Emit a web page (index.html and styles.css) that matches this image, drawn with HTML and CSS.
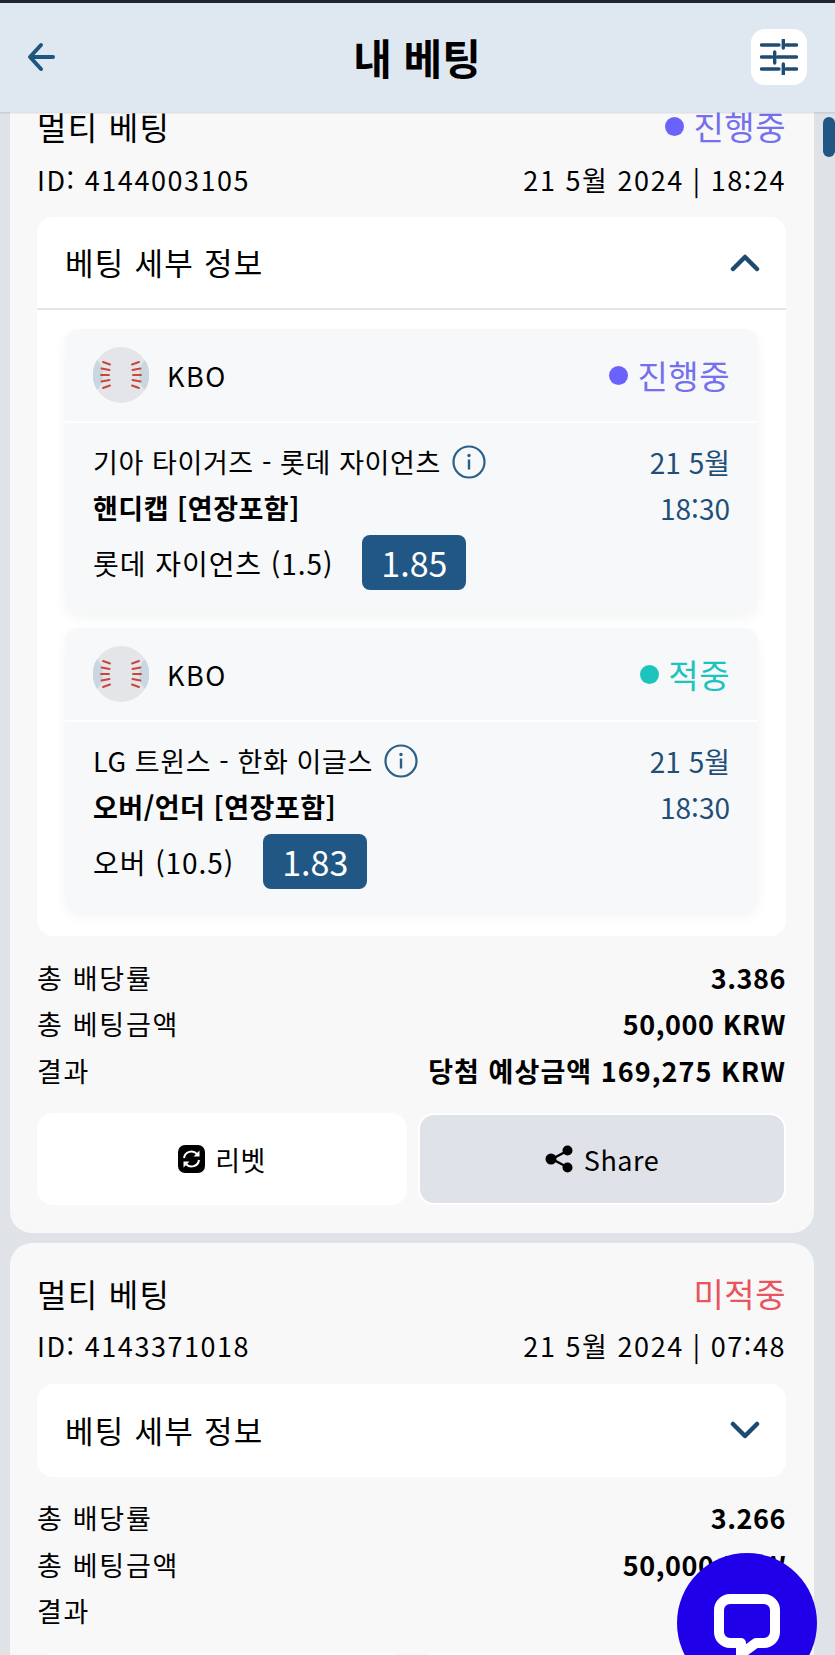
FILE: index.html
```html
<!DOCTYPE html>
<html lang="ko">
<head>
<meta charset="utf-8">
<title>내 베팅</title>
<link rel="stylesheet" href="styles.css">
</head>
<body>
<svg class="defs" width="0" height="0" aria-hidden="true">
  <defs>
    <symbol id="ball" viewBox="0 0 56 56">
      <circle cx="28" cy="28" r="28" fill="#e3e5e8"/>
      <path d="M4 13a28 28 0 0 0 0 30c4-4 6-9 6-15s-2-11-6-15zM52 13a28 28 0 0 1 0 30c-4-4-6-9-6-15s2-11 6-15z" fill="#cbd7e0"/>
      <path d="M10 15l7 2.500M8.500 21.500l8 1.500M8 28h8M8.500 34.500l8-1.500M10 41l7-2.500M46 15l-7 2.500M47.500 21.500l-8 1.500M48 28h-8M47.500 34.500l-8-1.500M46 41l-7-2.500" stroke="#c9463c" stroke-width="1.900" stroke-linecap="round" fill="none"/>
    </symbol>
    <symbol id="info" viewBox="0 0 34 34">
      <circle cx="17" cy="17" r="15.500" fill="none" stroke="#2a5f88" stroke-width="2.200"/>
      <circle cx="17" cy="10.500" r="1.700" fill="#2a5f88"/>
      <rect x="15.800" y="14.500" width="2.400" height="10" fill="#2a5f88"/>
    </symbol>
  </defs>
</svg>

<header class="topbar">
  <button class="icon-btn back" aria-label="뒤로">
    <svg width="30" height="30" viewBox="0 0 30 30"><path d="M26 15H3.500M14 3L3 15l11 12" fill="none" stroke="#1f5680" stroke-width="4" stroke-linecap="round" stroke-linejoin="round"/></svg>
  </button>
  <h1 class="page-title">내 베팅</h1>
  <button class="filter-btn" aria-label="필터">
    <svg width="38" height="36" viewBox="0 0 38 36"><path d="M1.500 6H19M26 6H36.500M23.300 1V9M1.500 18H12M17.500 18H36.500M14.700 13V24M1.500 30H19M26 30H36.500M23.300 25V35.500" fill="none" stroke="#1e4d73" stroke-width="3.400" stroke-linecap="round"/></svg>
  </button>
</header>

<main class="list">
  <article class="bet-card">
    <div class="row title-row">
      <span>멀티 베팅</span>
      <span class="status live"><i class="dot"></i>진행중</span>
    </div>
    <div class="row meta-row">
      <span>ID: 4144003105</span>
      <span>21 5월 2024 | 18:24</span>
    </div>
    <section class="panel">
      <div class="panel-head open">
        <span>베팅 세부 정보</span>
        <svg width="30" height="18" viewBox="0 0 30 18"><path d="M3 15L15 3l12 12" fill="none" stroke="#1e4a70" stroke-width="4.500" stroke-linecap="round" stroke-linejoin="round"/></svg>
      </div>
      <div class="legs">
        <div class="leg">
          <div class="leg-head">
            <svg class="ball"><use href="#ball"/></svg>
            <span class="league">KBO</span>
            <span class="status small live"><i class="dot"></i>진행중</span>
          </div>
          <div class="leg-body">
            <div class="leg-main">
              <div class="match">기아 타이거즈 - 롯데 자이언츠<svg class="info"><use href="#info"/></svg></div>
              <div class="market">핸디캡 [연장포함]</div>
              <div class="pick">롯데 자이언츠 (1.5)<span class="odds">1.85</span></div>
            </div>
            <div class="leg-time"><div>21 5월</div><div>18:30</div></div>
          </div>
        </div>
        <div class="leg">
          <div class="leg-head">
            <svg class="ball"><use href="#ball"/></svg>
            <span class="league">KBO</span>
            <span class="status small won"><i class="dot"></i>적중</span>
          </div>
          <div class="leg-body">
            <div class="leg-main">
              <div class="match">LG 트윈스 - 한화 이글스<svg class="info"><use href="#info"/></svg></div>
              <div class="market">오버/언더 [연장포함]</div>
              <div class="pick">오버 (10.5)<span class="odds">1.83</span></div>
            </div>
            <div class="leg-time"><div>21 5월</div><div>18:30</div></div>
          </div>
        </div>
      </div>
    </section>
    <dl class="totals">
      <div><dt>총 배당률</dt><dd>3.386</dd></div>
      <div><dt>총 베팅금액</dt><dd>50,000 KRW</dd></div>
      <div><dt>결과</dt><dd class="payout">당첨 예상금액 169,275 KRW</dd></div>
    </dl>
    <div class="actions">
      <button class="action rebet">
        <svg width="27" height="28" viewBox="0 0 27 28"><rect width="27" height="28" rx="7" fill="#000"/><path d="M6 13a7.500 7.500 0 0 1 13-4l1.500 1.500M21 15a7.500 7.500 0 0 1-13 4l-1.500-1.500" fill="none" stroke="#fff" stroke-width="2"/><path d="M21.500 5.500v6h-6zM5.500 22.500v-6h6z" fill="#fff"/></svg>
        <span>리벳</span>
      </button>
      <button class="action share">
        <svg width="29" height="28" viewBox="0 0 29 28"><path d="M22 6L7 14l15 8" fill="none" stroke="#000" stroke-width="2.500"/><circle cx="22.500" cy="5.500" r="5" fill="#000"/><circle cx="6" cy="14" r="5.500" fill="#000"/><circle cx="22.500" cy="22.500" r="5" fill="#000"/></svg>
        <span>Share</span>
      </button>
    </div>
  </article>

  <article class="bet-card">
    <div class="row title-row">
      <span>멀티 베팅</span>
      <span class="status lost">미적중</span>
    </div>
    <div class="row meta-row">
      <span>ID: 4143371018</span>
      <span>21 5월 2024 | 07:48</span>
    </div>
    <section class="panel">
      <div class="panel-head">
        <span>베팅 세부 정보</span>
        <svg width="30" height="18" viewBox="0 0 30 18"><path d="M3 3l12 12L27 3" fill="none" stroke="#1e4a70" stroke-width="4.500" stroke-linecap="round" stroke-linejoin="round"/></svg>
      </div>
    </section>
    <dl class="totals">
      <div><dt>총 배당률</dt><dd>3.266</dd></div>
      <div><dt>총 베팅금액</dt><dd>50,000 KRW</dd></div>
      <div><dt>결과</dt><dd></dd></div>
    </dl>
    <div class="actions">
      <button class="action rebet"></button>
      <button class="action share"></button>
    </div>
  </article>
</main>

<div class="scroll-thumb"></div>
<button class="chat" aria-label="채팅">
  <svg width="66" height="72" viewBox="0 0 66 72"><path d="M16 5H50A11 11 0 0 1 61 16V38A11 11 0 0 1 50 49H42L27 60V49H16A11 11 0 0 1 5 38V16A11 11 0 0 1 16 5Z" fill="none" stroke="#fff" stroke-width="10" stroke-linejoin="round"/></svg>
</button>
</body>
</html>
```
FILE: styles.css
```css
* { box-sizing: border-box; }
html, body { margin: 0; padding: 0; }
body {
  position: relative;
  width: 835px;
  height: 1655px;
  overflow: hidden;
  display: flex;
  flex-direction: column;
  background: #dfe3e8;
  color: #000;
  font-family: "Noto Sans CJK KR", "Noto Sans", sans-serif;
}
.defs { position: absolute; }
button { font: inherit; color: inherit; border: 0; padding: 0; background: none; }

.topbar {
  position: relative;
  z-index: 2;
  flex: none;
  height: 112px;
  border-top: 3px solid #22262c;
  background: #dfe8f1;
  box-shadow: 0 1px 2px rgba(60, 80, 100, .2);
  display: grid;
  grid-template-columns: 56px 1fr 56px;
  align-items: center;
  padding: 0 28px 1px 27px;
}
.back { display: flex; width: 30px; }
.page-title {
  margin: 0;
  font-size: 42px;
  font-weight: 700;
  line-height: 48px;
  text-align: center;
}
.filter-btn {
  width: 56px;
  height: 56px;
  border-radius: 14px;
  background: #fff;
  display: flex;
  align-items: center;
  justify-content: center;
}

.list {
  flex: 1;
  min-height: 0;
  margin: -36px 21px 0 10px;
  display: flex;
  flex-direction: column;
  gap: 10px;
}
.bet-card {
  flex: none;
  border-radius: 22px;
  background: #f8f8f9;
  padding: 28px 28px 28px 27px;
}
.row {
  display: flex;
  justify-content: space-between;
  align-items: center;
}
.title-row { height: 44px; font-size: 32px; }
.title-row > span:first-child { letter-spacing: 1.300px; }
.meta-row { height: 62px; font-size: 27px; letter-spacing: 1.550px; }

.status { display: flex; align-items: center; font-size: 33px; letter-spacing: .5px; }
.dot {
  width: 19px;
  height: 19px;
  border-radius: 50%;
  margin-right: 9px;
  background: currentColor;
}
.live { color: #7570ee; }
.live .dot { background: #6a63fb; }
.won { color: #1bc4bc; }
.lost { color: #e8555c; }

.panel {
  margin-top: 7px;
  border-radius: 16px;
  background: #fff;
}
.panel-head {
  height: 93px;
  padding: 0 26px 0 28px;
  display: flex;
  align-items: center;
  justify-content: space-between;
  font-size: 31px;
  letter-spacing: 1.250px;
}
.panel-head span { margin-bottom: 2px; }
.panel-head.open { border-bottom: 2px solid #e3e6ea; }

.legs {
  padding: 19px 28px 25px;
  display: flex;
  flex-direction: column;
  gap: 16px;
}
.leg {
  border-radius: 14px;
  background: #f7f8f9;
  box-shadow: 0 6px 12px rgba(70, 80, 100, .06);
}
.leg-head {
  height: 94px;
  padding: 0 28px;
  display: flex;
  align-items: center;
  border-bottom: 2px solid #fff;
}
.ball { width: 56px; height: 56px; flex: none; }
.league { margin-left: 18px; font-size: 27px; letter-spacing: 1.500px; }
.status.small { margin-left: auto; }
.leg-body {
  height: 189px;
  padding: 16px 28px 0;
  display: flex;
  justify-content: space-between;
}
.match {
  height: 45px;
  display: flex;
  align-items: center;
  font-size: 27px;
  letter-spacing: .6px;
}
.info { width: 34px; height: 34px; margin-left: 11px; }
.market {
  height: 46px;
  display: flex;
  align-items: center;
  font-size: 27px;
  letter-spacing: .5px;
  font-weight: 700;
}
.pick {
  margin-top: 5px;
  height: 55px;
  display: flex;
  align-items: center;
  font-size: 28px;
  letter-spacing: .95px;
}
.odds {
  margin-left: 29px;
  width: 104px;
  height: 55px;
  border-radius: 8px;
  background: #215785;
  color: #fff;
  font-size: 34px;
  letter-spacing: 0;
  display: flex;
  align-items: center;
  justify-content: center;
}
.leg-time {
  text-align: right;
  color: #1f4f77;
  font-size: 28px;
}
.leg-time div { height: 46px; line-height: 46px; }

.totals { margin: 18px 0 0; }
.totals div {
  height: 46.500px;
  display: flex;
  justify-content: space-between;
  align-items: center;
  font-size: 27px;
}
.totals dt { margin: 0; letter-spacing: 1.700px; }
.totals dd { margin: 0; font-weight: 700; letter-spacing: .55px; }
.totals dd.payout { letter-spacing: 1.050px; }

.actions {
  margin-top: 19px;
  display: grid;
  grid-template-columns: 370px 1fr;
  gap: 11px;
  height: 92px;
}
.action {
  border-radius: 16px;
  display: flex;
  align-items: center;
  justify-content: center;
  gap: 10px;
  padding-top: 1px;
  font-size: 27px;
  letter-spacing: .5px;
}
.rebet { background: #fff; }
.share { background: #dfe3e9; border: 2px solid #fff; }

.scroll-thumb {
  position: absolute;
  z-index: 3;
  top: 117px;
  left: 823px;
  width: 12px;
  height: 40px;
  border-radius: 6px;
  background: #215785;
}
.chat {
  position: absolute;
  z-index: 4;
  left: 677px;
  top: 1553px;
  width: 140px;
  height: 140px;
  border-radius: 50%;
  background: #2000e8;
  display: flex;
  justify-content: center;
  padding-top: 41px;
}
```
